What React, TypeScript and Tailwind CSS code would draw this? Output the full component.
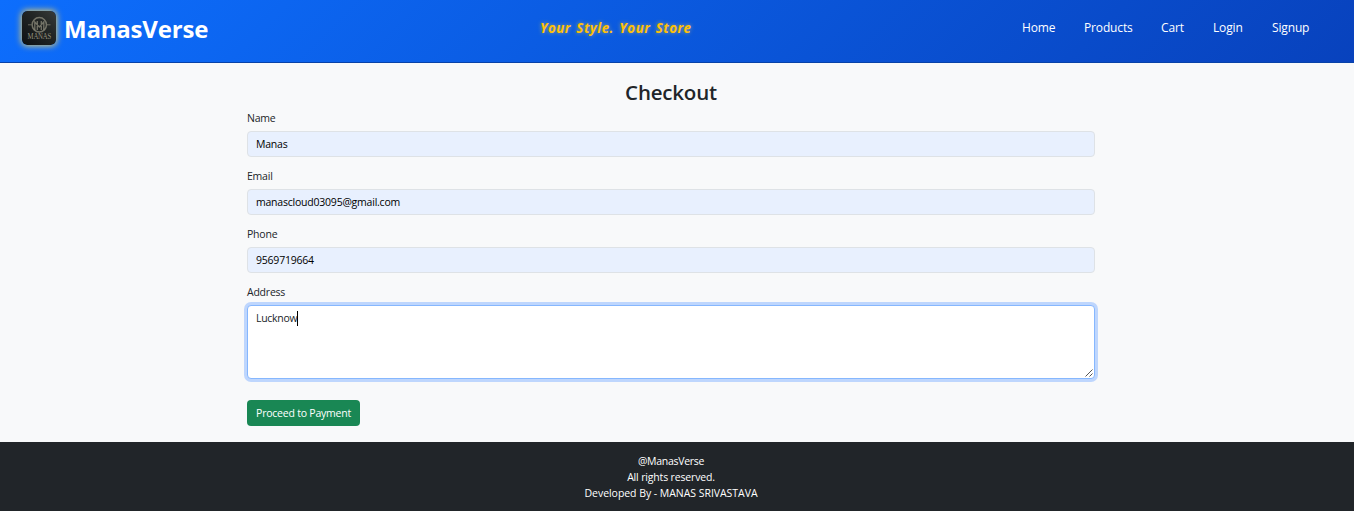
import React from "react";

const fields = [
  { label: "Name", value: "Manas" },
  { label: "Email", value: "manascloud03095@gmail.com" },
  { label: "Phone", value: "9569719664" },
];

const links = [
  { label: "Home", width: "w-[33px]" },
  { label: "Products", width: "w-[48px]" },
  { label: "Cart", width: "w-[23px]" },
  { label: "Login", width: "w-[30px]" },
  { label: "Signup", width: "w-[38px]" },
];

function Logo() {
  return (
    <svg
      viewBox="0 0 34 34"
      className="h-[34px] w-[34px] shrink-0 rounded-[5px] shadow-[0_0_6px_1px_rgba(255,215,80,0.85)]"
    >
      <defs>
        <linearGradient id="tile" x1="0" y1="1" x2="1" y2="0">
          <stop offset="0" stopColor="#0e1112" />
          <stop offset="0.6" stopColor="#222625" />
          <stop offset="1" stopColor="#383b39" />
        </linearGradient>
      </defs>
      <rect width="34" height="34" rx="5" fill="url(#tile)" />
      <g fill="none" stroke="#8f8d7d" strokeOpacity="0.75">
        <circle cx="17.300" cy="13.800" r="7.200" strokeWidth="1.500" />
        <path d="M12.800 19v-8l4.500 5 4.500-5v8M15.300 19v-9M19.300 19v-9" strokeWidth="1.300" />
        <path d="M6 13.800h3.500M25 13.800h3.500" strokeWidth="0.900" />
      </g>
      <text
        x="17.300"
        y="28"
        textAnchor="middle"
        fontFamily="Liberation Serif, serif"
        fontSize="8"
        textLength="23.500"
        lengthAdjust="spacingAndGlyphs"
        fill="#95917f"
      >
        MANAS
      </text>
    </svg>
  );
}

export default function App() {
  return (
    <div className="flex h-[511px] w-full flex-col overflow-hidden bg-[#f8f9fa] font-['Open_Sans',sans-serif] text-[10.500px] leading-4 tracking-[-0.22px] text-[#212529]">
      <nav className="flex h-[63px] shrink-0 items-start border-b border-[#0842a8] bg-[linear-gradient(135deg,#0d6efd,#0842bd)]">
        <div className="flex w-[540px] shrink-0 items-start pt-[11px] pl-[22px]">
          <Logo />
          <span className="ml-[8px] pt-px text-[24px] leading-[34px] font-bold tracking-[-0.2px] whitespace-nowrap text-white">
            ManasVerse
          </span>
        </div>
        <div className="mt-[18px] w-[482px] shrink-0 text-[13.300px] leading-5 font-bold tracking-[0.5px] [word-spacing:1.500px] whitespace-nowrap text-[#ffc107] italic [text-shadow:0_0_4px_rgba(255,215,80,0.6)]">
          Your Style. Your Store
        </div>
        <div className="mt-[18px] flex shrink-0 gap-[29px] text-[12px] leading-5 tracking-[-0.15px] whitespace-nowrap text-white">
          {links.map((l) => (
            <a key={l.label} href="#" className={l.width}>
              {l.label}
            </a>
          ))}
        </div>
      </nav>

      <main className="flex h-[379px] w-[1342px] shrink-0 flex-col items-center pt-[16px]">
        <h2 className="h-[31px] text-[20.500px] leading-[26px] font-semibold tracking-[-0.2px]">Checkout</h2>
        <form className="flex w-[848px] flex-col">
          {fields.map((f) => (
            <div key={f.label} className="h-[58px]">
              <label className="mb-[5px] block">{f.label}</label>
              <input
                readOnly
                value={f.value}
                className="block h-[26px] w-full rounded-[4px] border border-[#dee2e6] bg-[#e8f0fe] px-[8px] tracking-[-0.22px] text-black outline-none"
              />
            </div>
          ))}
          <label className="mb-[5px] block">Address</label>
          <div className="relative h-[74px] rounded-[4px] border border-[#86b7fe] bg-white px-[8px] pt-[4px] shadow-[0_0_0_3px_#bed6fd]">
            <div className="flex items-center">
              <span className="tracking-[-0.3px]">Lucknow</span>
              <span className="h-[15px] w-px bg-black" />
            </div>
            <svg viewBox="0 0 8 8" className="absolute right-[1px] bottom-[1px] h-2 w-2">
              <path d="M0.500 7.500l7-7M4.500 7.500l3-3" stroke="#555" fill="none" />
            </svg>
          </div>
          <button
            type="button"
            className="mt-[21px] h-[26px] w-[113px] rounded-[4px] bg-[#198754] text-center tracking-[-0.22px] whitespace-nowrap text-white"
          >
            Proceed to Payment
          </button>
        </form>
      </main>

      <footer className="h-[69px] shrink-0 bg-[#212529] pt-[11px] text-center text-white">
        <div className="w-[1342px]">
          <p className="tracking-[-0.28px]">@ManasVerse</p>
          <p className="tracking-[-0.16px]">All rights reserved.</p>
          <p className="tracking-[-0.04px]">Developed By - MANAS SRIVASTAVA</p>
        </div>
      </footer>
    </div>
  );
}
